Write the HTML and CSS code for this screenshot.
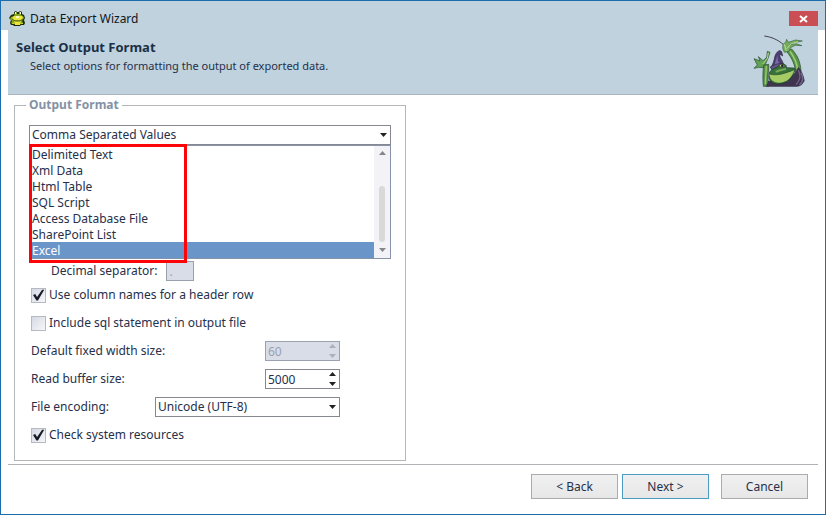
FILE: index.html
```html
<!DOCTYPE html>
<html lang="en">
<head>
<meta charset="utf-8">
<title>Data Export Wizard</title>
<link rel="stylesheet" href="styles.css">
</head>
<body>
<div class="window">
  <header class="titlebar">
    <svg class="app-icon" viewBox="0 0 17 16" aria-hidden="true">
      <path d="M5 1l2-1 1 1h2l1-1 2 1v2l2 1 1 3-1 2 1 3-1 2h-3l-1 1H5l-1-1H2l-1-2 1-3-2-2 2-3 3-1z" fill="#1c2b08"/>
      <path d="M6 1h2v2h2V1h2v3l2 1 1 2-2 3 1 2-1 1H4l-2-1 1-2-2-2 1-2 3-1z" fill="#86a81c"/>
      <path d="M5 5h8l1 2-2 2H5L3 7zM5 10h7l-1 4H6z" fill="#ece63a"/>
      <path d="M3 8l3 2h5l3-2" fill="none" stroke="#56691a"/>
      <path d="M6 1h1v2H6zm5 0h1v2h-1zM7 5h3v2H7z" fill="#fffcc0"/>
      <path d="M3 12h2v1H3zm9 0h2v1h-2z" fill="#c7d82c"/>
    </svg>
    <span class="window-title">Data Export Wizard</span>
    <button class="close" type="button" aria-label="Close">
      <svg viewBox="0 0 9 8" aria-hidden="true"><path d="M1 1l7 6M8 1L1 7" stroke="#fff" stroke-width="2"/></svg>
    </button>
  </header>

  <div class="banner">
    <div class="banner-text">
      <h1>Select Output Format</h1>
      <p>Select options for formatting the output of exported data.</p>
    </div>
    <svg class="mascot" viewBox="0 0 168 174" aria-hidden="true">
      <path d="M43 12c22 3 40 11 58 26" fill="none" stroke="#463f4c" stroke-width="3"/>
      <path d="M108 56l17-5c15 16 26 35 28 66l-17 8c1-25-10-47-28-69z" fill="#579449" stroke="#28472d" stroke-width="2"/>
      <path d="M119 57c14 18 22 36 24 58" fill="none" stroke="#9ccb70" stroke-width="5"/>
      <path d="M99 37l8-6 3-9 5 9 22-7 20 3-24 5-14 7 19-4 18 6-20-1-15 7-3 11-15 3-5-13z" fill="#73ad5d" stroke="#3b633e" stroke-width="2"/>
      <path d="M103 37l6 19M111 50l13-15 20-6" fill="none" stroke="#c3dda0" stroke-width="3"/>
      <path d="M12 80l18 7-5-13 14 12 11-10 2-18 8 3-6 18-6 14-8 14-14-1-14 3 10-10z" fill="#62a355" stroke="#27482f" stroke-width="2"/>
      <path d="M55 62l-3 18-14 16" fill="none" stroke="#b4d690" stroke-width="3"/>
      <path d="M41 99l15-2c1 12 0 22-3 35l3 31H40c-2-21-2-40 1-64z" fill="#559246" stroke="#29472b" stroke-width="2"/>
      <path d="M49 102l-3 55" fill="none" stroke="#a0cc73" stroke-width="4"/>
      <path d="M145 104c9 10 16 24 19 42-5 10-12 17-24 18H48l7-18 55 4 27-31z" fill="#40354f"/>
      <path d="M145 115c8 15 8 27-7 43M153 122c9 17 5 29-5 37" fill="none" stroke="#75668d" stroke-width="4"/>
      <path d="M62 106c7-8 10-19 13-34 4-12 14-21 20-13l3 13-8-6c-3 9 4 15 8 23l1 8-32 14z" fill="#4d3e73" stroke="#292139" stroke-width="2"/>
      <path d="M73 101l9-31 2 17 6 8" fill="#7868a4"/>
      <path d="M61 105c16-9 27-12 40-10l2 6c-15 0-24 5-37 13z" fill="#66588b" stroke="#2b2540" stroke-width="2"/>
      <path d="M58 123c3-9 12-14 24-18 8-10 20-11 27-4l-1 6 23 1c5 1 6 4 3 9-8 24-26 39-52 39-18-1-31-14-24-33z" fill="#35713a" stroke="#19352b" stroke-width="2"/>
      <path d="M58 126c24 7 50-3 75-13-6 23-24 39-46 39-18 0-28-10-29-26z" fill="#a5cb65"/>
      <path d="M58 126c24 7 50-3 75-13" fill="none" stroke="#244a2b" stroke-width="2"/>
      <path d="M77 119c12-3 18-7 31-8" fill="none" stroke="#76a952" stroke-width="6"/>
      <ellipse cx="96" cy="101" rx="8" ry="5" fill="#d7d28d" stroke="#243d2a" stroke-width="2"/>
      <circle cx="97" cy="101" r="4" fill="#1d2824"/>
    </svg>
  </div>

  <main class="page">
    <fieldset class="group">
      <legend>Output Format</legend>
      <div class="combo">
        <select class="field" aria-label="Output format"><option>Comma Separated Values</option></select>
        <svg class="arrow" viewBox="0 0 7 4" aria-hidden="true"><path d="M0 0h7L3.500 4z" fill="#222"/></svg>
        <div class="popup">
          <select class="list" size="7" aria-label="Available formats">
            <option>Delimited Text</option>
            <option>Xml Data</option>
            <option>Html Table</option>
            <option>SQL Script</option>
            <option>Access Database File</option>
            <option>SharePoint List</option>
            <option selected>Excel</option>
          </select>
          <div class="scrollbar" aria-hidden="true">
            <svg viewBox="0 0 7 4"><path d="M0 4h7L3.500 0z" fill="#85858b"/></svg>
            <span class="thumb"></span>
            <svg viewBox="0 0 7 4"><path d="M0 0h7L3.500 4z" fill="#85858b"/></svg>
          </div>
          <div class="highlight"></div>
        </div>
      </div>

      <div class="options">
        <div class="decimal">
          <label for="decimal">Decimal separator:</label>
          <input class="field" id="decimal" type="text" value="." disabled>
        </div>
        <label class="row check"><input type="checkbox" checked>Use column names for a header row</label>
        <label class="row check"><input type="checkbox">Include sql statement in output file</label>
        <div class="row">
          <label for="width">Default fixed width size:</label>
          <div class="spinner">
            <input class="field" id="width" type="number" value="60" disabled>
            <svg class="steps off" viewBox="0 0 7 14" aria-hidden="true"><path d="M0 4h7L3.500 0zM0 10h7l-3.500 4z"/></svg>
          </div>
        </div>
        <div class="row">
          <label for="buffer">Read buffer size:</label>
          <div class="spinner">
            <input class="field" id="buffer" type="number" value="5000">
            <svg class="steps" viewBox="0 0 7 14" aria-hidden="true"><path d="M0 4h7L3.500 0zM0 10h7l-3.500 4z"/></svg>
          </div>
        </div>
        <div class="row">
          <label for="encoding">File encoding:</label>
          <div class="encoding">
            <select class="field" id="encoding"><option>Unicode (UTF-8)</option></select>
            <svg class="arrow" viewBox="0 0 7 4" aria-hidden="true"><path d="M0 0h7L3.500 4z" fill="#222"/></svg>
          </div>
        </div>
        <label class="row check"><input type="checkbox" checked>Check system resources</label>
      </div>
    </fieldset>
  </main>

  <footer class="actions">
    <button class="btn" type="button">&lt; Back</button>
    <button class="btn next" type="button">Next &gt;</button>
    <button class="btn cancel" type="button">Cancel</button>
  </footer>
</div>
</body>
</html>
```

FILE: styles.css
```css
* { box-sizing: border-box; }

body {
  margin: 0;
  background: #fff;
  color: #26304a;
  font: 12px/16px "Noto Sans", "Open Sans", sans-serif;
}

.window {
  display: flex;
  flex-direction: column;
  min-height: 100vh;
  border: 1px solid #1d6cab;
}

.titlebar {
  display: flex;
  align-items: center;
  height: 29px;
  padding: 6px 7px 0 8px;
  background: #bfd2de;
  color: #101820;
}

.app-icon { width: 17px; height: 16px; margin-right: 4px; }
.window-title { flex: 1; }

.close {
  display: flex;
  align-items: center;
  justify-content: center;
  width: 29px;
  height: 15px;
  padding: 0;
  border: 0;
  background: #c94f54;
}
.close svg { width: 9px; height: 8px; }

.banner {
  display: flex;
  justify-content: space-between;
  height: 65px;
  margin: 0 7px;
  padding: 0 12px 0 8px;
  border-bottom: 1px solid #a9b5be;
  background: #bfd2de;
}
.banner-text { padding-top: 8px; }
.banner h1 {
  margin: 0;
  color: #1a3046;
  font-size: 13px;
  line-height: 18px;
}
.banner p { margin: 2px 0 0 14px; font-size: 11px; }
.mascot { width: 56px; height: 58px; margin-top: 2px; }

.page { flex: 1; padding: 2px 13px 3px; }

.group {
  width: 392px;
  margin: 0;
  padding: 12px 14px 11px;
  border: 1px solid #b4b6ba;
}
.group legend {
  padding: 0 3px;
  margin-left: -3px;
  color: #8492a4;
  font-size: 12px;
  font-weight: 700;
}

.field {
  width: 100%;
  height: 20px;
  margin: 0;
  padding: 0 2px;
  border: 1px solid #85888f;
  border-radius: 0;
  outline: 0;
  background: #fff;
  color: #26304a;
  font: inherit;
  appearance: none;
}
.field:disabled { border-color: #9aa2b0; background: #d8dde7; color: #98a1b2; opacity: 1; }

.combo, .encoding, .spinner { position: relative; display: flex; }
.combo { height: 20px; }
.arrow {
  position: absolute;
  right: 4px;
  top: 8px;
  width: 7px;
  height: 4px;
  pointer-events: none;
}

.popup {
  position: absolute;
  top: 20px;
  left: 0;
  right: 0;
  display: flex;
  height: 114px;
  border: 1px solid #8793a8;
  background: #fff;
}
.list {
  flex: 1;
  height: 112px;
  margin: 0;
  padding: 0;
  border: 0;
  border-radius: 0;
  outline: 0;
  overflow: hidden;
  background: #fff;
  color: #26304a;
  font: inherit;
}
.list option { height: 16px; min-height: 16px; padding: 0 2px; line-height: 16px; }
.list option:checked {
  background: linear-gradient(#6a95c8, #6a95c8);
  color: #fff;
  -webkit-text-fill-color: #fff;
}
.scrollbar {
  display: flex;
  flex-direction: column;
  align-items: center;
  width: 16px;
  padding: 5px 0 6px;
  background: #f3f3f7;
}
.scrollbar svg { width: 7px; height: 4px; }
.thumb { width: 6px; height: 56px; margin: auto 0 6px; border-radius: 3px; background: #d9d9d9; }
.highlight {
  position: absolute;
  top: -2px;
  left: -1px;
  width: 158px;
  height: 119px;
  border: 3px solid #fb0509;
  pointer-events: none;
}

.options { margin: 116px 0 0 2px; }
.decimal { display: flex; align-items: center; gap: 9px; height: 20px; margin-left: 20px; }
.decimal .field { width: 28px; }
.row { display: flex; align-items: center; justify-content: space-between; height: 28px; padding-right: 51px; }
.spinner { width: 75px; }
.encoding { width: 185px; }
input[type="number"]::-webkit-inner-spin-button { display: none; }
.steps {
  position: absolute;
  right: 4px;
  top: 3px;
  width: 7px;
  height: 14px;
  fill: #222;
  pointer-events: none;
}
.steps.off { fill: #a9b0bd; }

.check { justify-content: flex-start; gap: 3px; }
.check input {
  width: 15px;
  height: 15px;
  margin: 0;
  border: 1px solid #b5b9c2;
  background: linear-gradient(135deg, #d5d9e2, #f6f7fa);
  appearance: none;
}
.check input:checked::before {
  content: "";
  display: block;
  width: 13px;
  height: 13px;
  background: #181c28;
  clip-path: polygon(8% 50%, 25% 42%, 39% 65%, 78% 9%, 94% 9%, 46% 92%, 34% 92%);
}

.actions {
  display: flex;
  gap: 4px;
  margin: 0 7px;
  padding: 9px 10px 15px;
  border-top: 1px solid #b0b2b6;
  justify-content: flex-end;
}
.btn {
  width: 87px;
  height: 25px;
  padding: 0;
  border: 1px solid #a9abaf;
  background: linear-gradient(#f0f0f0, #e7e7e7);
  color: #26304a;
  font: inherit;
}
.btn.next { border-color: #4a9cc4; }
.btn.cancel { margin-left: 8px; }
```
